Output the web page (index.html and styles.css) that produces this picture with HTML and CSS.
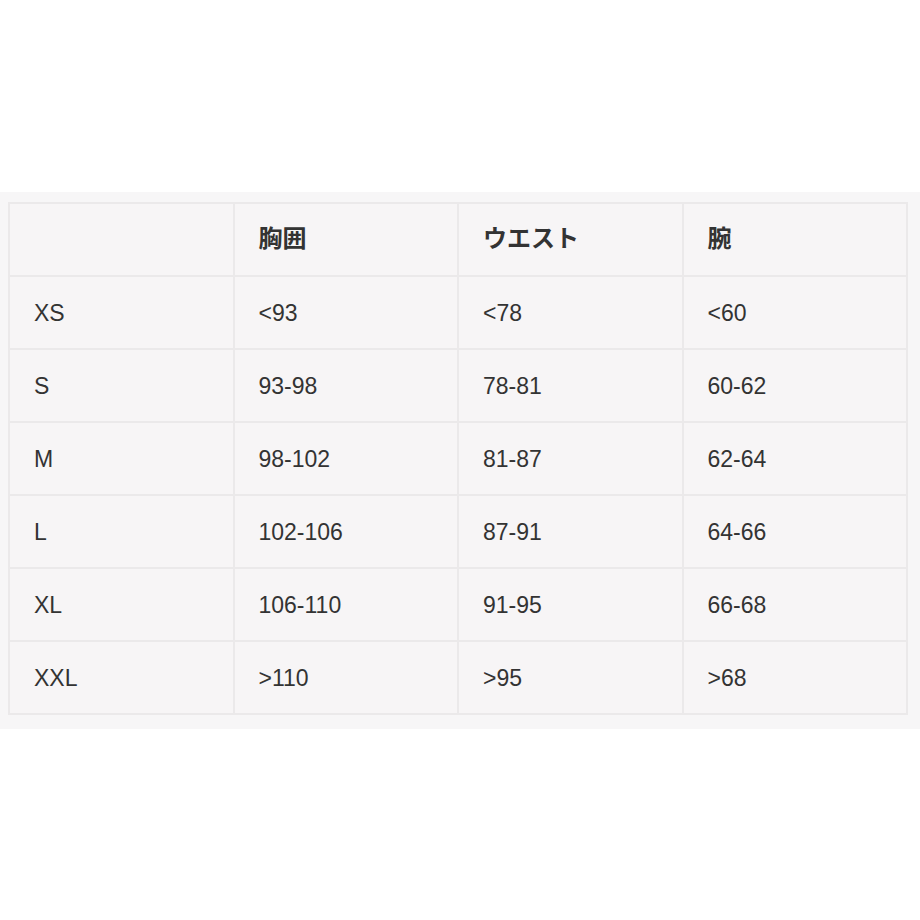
FILE: index.html
```html
<!DOCTYPE html>
<html lang="ja">
<head>
<meta charset="utf-8">
<link rel="stylesheet" href="styles.css">
</head>
<body>
<div class="wrap">
<table class="size">
<thead>
<tr><th></th><th>胸囲</th><th>ウエスト</th><th>腕</th></tr>
</thead>
<tbody>
<tr><td>XS</td><td>&lt;93</td><td>&lt;78</td><td>&lt;60</td></tr>
<tr><td>S</td><td>93-98</td><td>78-81</td><td>60-62</td></tr>
<tr><td>M</td><td>98-102</td><td>81-87</td><td>62-64</td></tr>
<tr><td>L</td><td>102-106</td><td>87-91</td><td>64-66</td></tr>
<tr><td>XL</td><td>106-110</td><td>91-95</td><td>66-68</td></tr>
<tr><td>XXL</td><td>&gt;110</td><td>&gt;95</td><td>&gt;68</td></tr>
</tbody>
</table>
</div>
</body>
</html>
```
FILE: styles.css
```css
html, body {
  margin: 0;
  padding: 0;
  background: #ffffff;
}
body {
  font-family: "Liberation Sans", "Noto Sans CJK JP", sans-serif;
  color: #333333;
}
.wrap {
  margin-top: 192px;
  background: #f7f6f7;
  padding: 10px 12px 14px 8px;
}
.size {
  width: 900px;
  border-collapse: collapse;
  table-layout: fixed;
  background: #f7f5f6;
}
.size th, .size td {
  border: 2px solid #ebe9ea;
  height: 71px;
  padding: 0 0 0 24px;
  text-align: left;
  font-size: 23px;
  line-height: 26px;
}
.size th {
  font-family: "Noto Sans CJK JP", sans-serif;
  font-weight: 700;
  font-size: 24px;
  padding-bottom: 6px;
  height: 65px;
}
```
